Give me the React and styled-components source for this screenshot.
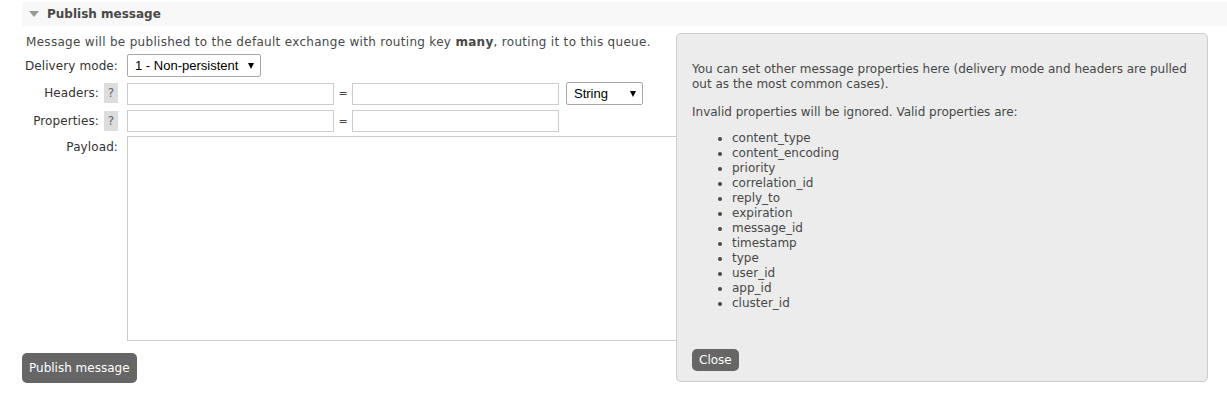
import styled, { createGlobalStyle } from "styled-components";

const GlobalStyle = createGlobalStyle`
  html, body {
    margin: 0;
    padding: 0;
    background: #fff;
  }
  body {
    font-family: "DejaVu Sans", Verdana, sans-serif;
    font-size: 12px;
    color: #484848;
  }
`;

const Page = styled.div`
  position: relative;
  width: 1227px;
  height: 397px;
  overflow: hidden;
  padding-top: 2px;
  box-sizing: border-box;
`;

const Section = styled.div`
  margin-left: 22px;
`;

const SectionHeader = styled.div`
  display: flex;
  align-items: center;
  height: 24px;
  background: #f8f8f8;
  padding-left: 7px;
  gap: 8px;
  font-weight: bold;
  font-size: 12px;
  color: #484848;
`;

const Arrow = styled.span`
  width: 0;
  height: 0;
  border-left: 5px solid transparent;
  border-right: 5px solid transparent;
  border-top: 6px solid #999;
`;

const Body = styled.div`
  padding: 8px 0 0 4px;
`;

const Intro = styled.p`
  margin: 0 0 3px 0;
  line-height: 17px;
  letter-spacing: 0.3px;
`;

const Form = styled.div`
  display: grid;
  grid-template-columns: 92px auto;
  column-gap: 9px;
  align-items: start;
`;

const Label = styled.div`
  display: flex;
  justify-content: flex-end;
  align-items: center;
  gap: 5px;
  height: ${(p) => p.$h}px;
  margin-top: ${(p) => p.$mt || 0}px;
  color: #333;
  white-space: nowrap;
  letter-spacing: 0.1px;
`;

const Help = styled.span`
  display: inline-flex;
  align-items: center;
  justify-content: center;
  width: 14px;
  height: 20px;
  background: #ddd;
  color: #666;
  font-size: 12px;
`;

const Field = styled.div`
  display: flex;
  align-items: center;
  margin-top: ${(p) => p.$mt || 0}px;
`;

const Select = styled.div`
  box-sizing: border-box;
  display: flex;
  align-items: center;
  justify-content: space-between;
  width: ${(p) => p.$w}px;
  height: ${(p) => p.$h}px;
  border: 1px solid #a9a9a9;
  border-radius: 2px;
  background: #fff;
  padding: 0 6px 0 7px;
  font-family: "Liberation Sans", Arial, sans-serif;
  font-size: 13px;
  color: #000;
  &::after {
    content: "";
    border-left: 3.5px solid transparent;
    border-right: 3.5px solid transparent;
    border-top: 6px solid #000;
  }
`;

const Input = styled.input`
  box-sizing: border-box;
  width: 207px;
  height: 22px;
  border: 1px solid #ccc;
  margin: 0;
  padding: 0;
  background: #fff;
`;

const Equals = styled.span`
  width: 18px;
  text-align: center;
  color: #484848;
  font-size: 11px;
`;

const Spacer = styled.span`
  width: 7px;
`;

const Payload = styled.textarea`
  box-sizing: border-box;
  display: block;
  width: 800px;
  height: 205px;
  border: 1px solid #ccc;
  margin: 0;
  resize: none;
`;

const Button = styled.button`
  font-family: "DejaVu Sans", Verdana, sans-serif;
  font-size: 12px;
  color: #fff;
  background: #666;
  border: none;
  border-radius: 5px;
  padding: 0 7px;
  height: ${(p) => p.$h}px;
  cursor: pointer;
`;

const Actions = styled.div`
  margin-top: 12px;
  margin-left: -4px;
`;

const Popup = styled.div`
  position: absolute;
  left: 676px;
  top: 33px;
  width: 532px;
  height: 349px;
  box-sizing: border-box;
  background: #ececec;
  border: 1px solid #ccc;
  border-radius: 5px;
  padding: 28px 15px 0 15px;
  color: #484848;
  line-height: 15px;
`;

const Note = styled.p`
  margin: 0 0 ${(p) => p.$mb}px 0;
`;

const List = styled.ul`
  margin: 0;
  padding-left: 40px;
  li {
    line-height: 15px;
  }
`;

const PopupActions = styled.div`
  margin-top: 38px;
`;

const properties = [
  "content_type",
  "content_encoding",
  "priority",
  "correlation_id",
  "reply_to",
  "expiration",
  "message_id",
  "timestamp",
  "type",
  "user_id",
  "app_id",
  "cluster_id",
];

export default function App() {
  return (
    <Page>
      <GlobalStyle />
      <Section>
        <SectionHeader>
          <Arrow />
          Publish message
        </SectionHeader>
        <Body>
          <Intro>
            Message will be published to the default exchange with routing key <b>many</b>, routing it to this queue.
          </Intro>
          <Form>
            <Label $h={23}>Delivery mode:</Label>
            <Field>
              <Select $w={134} $h={23}>1 - Non-persistent</Select>
            </Field>

            <Label $h={21} $mt={5}>
              Headers: <Help>?</Help>
            </Label>
            <Field $mt={5}>
              <Input />
              <Equals>=</Equals>
              <Input />
              <Spacer />
              <Select $w={77} $h={23}>String</Select>
            </Field>

            <Label $h={21} $mt={5}>
              Properties: <Help>?</Help>
            </Label>
            <Field $mt={5}>
              <Input />
              <Equals>=</Equals>
              <Input />
            </Field>

            <Label $h={22} $mt={4}>Payload:</Label>
            <Field $mt={4}>
              <Payload />
            </Field>
          </Form>
          <Actions>
            <Button $h={30}>Publish message</Button>
          </Actions>
        </Body>
      </Section>
      <Popup>
        <Note $mb={13}>
          You can set other message properties here (delivery mode and headers are pulled out as the most common cases).
        </Note>
        <Note $mb={11}>Invalid properties will be ignored. Valid properties are:</Note>
        <List>
          {properties.map((p) => (
            <li key={p}>{p}</li>
          ))}
        </List>
        <PopupActions>
          <Button $h={22}>Close</Button>
        </PopupActions>
      </Popup>
    </Page>
  );
}
